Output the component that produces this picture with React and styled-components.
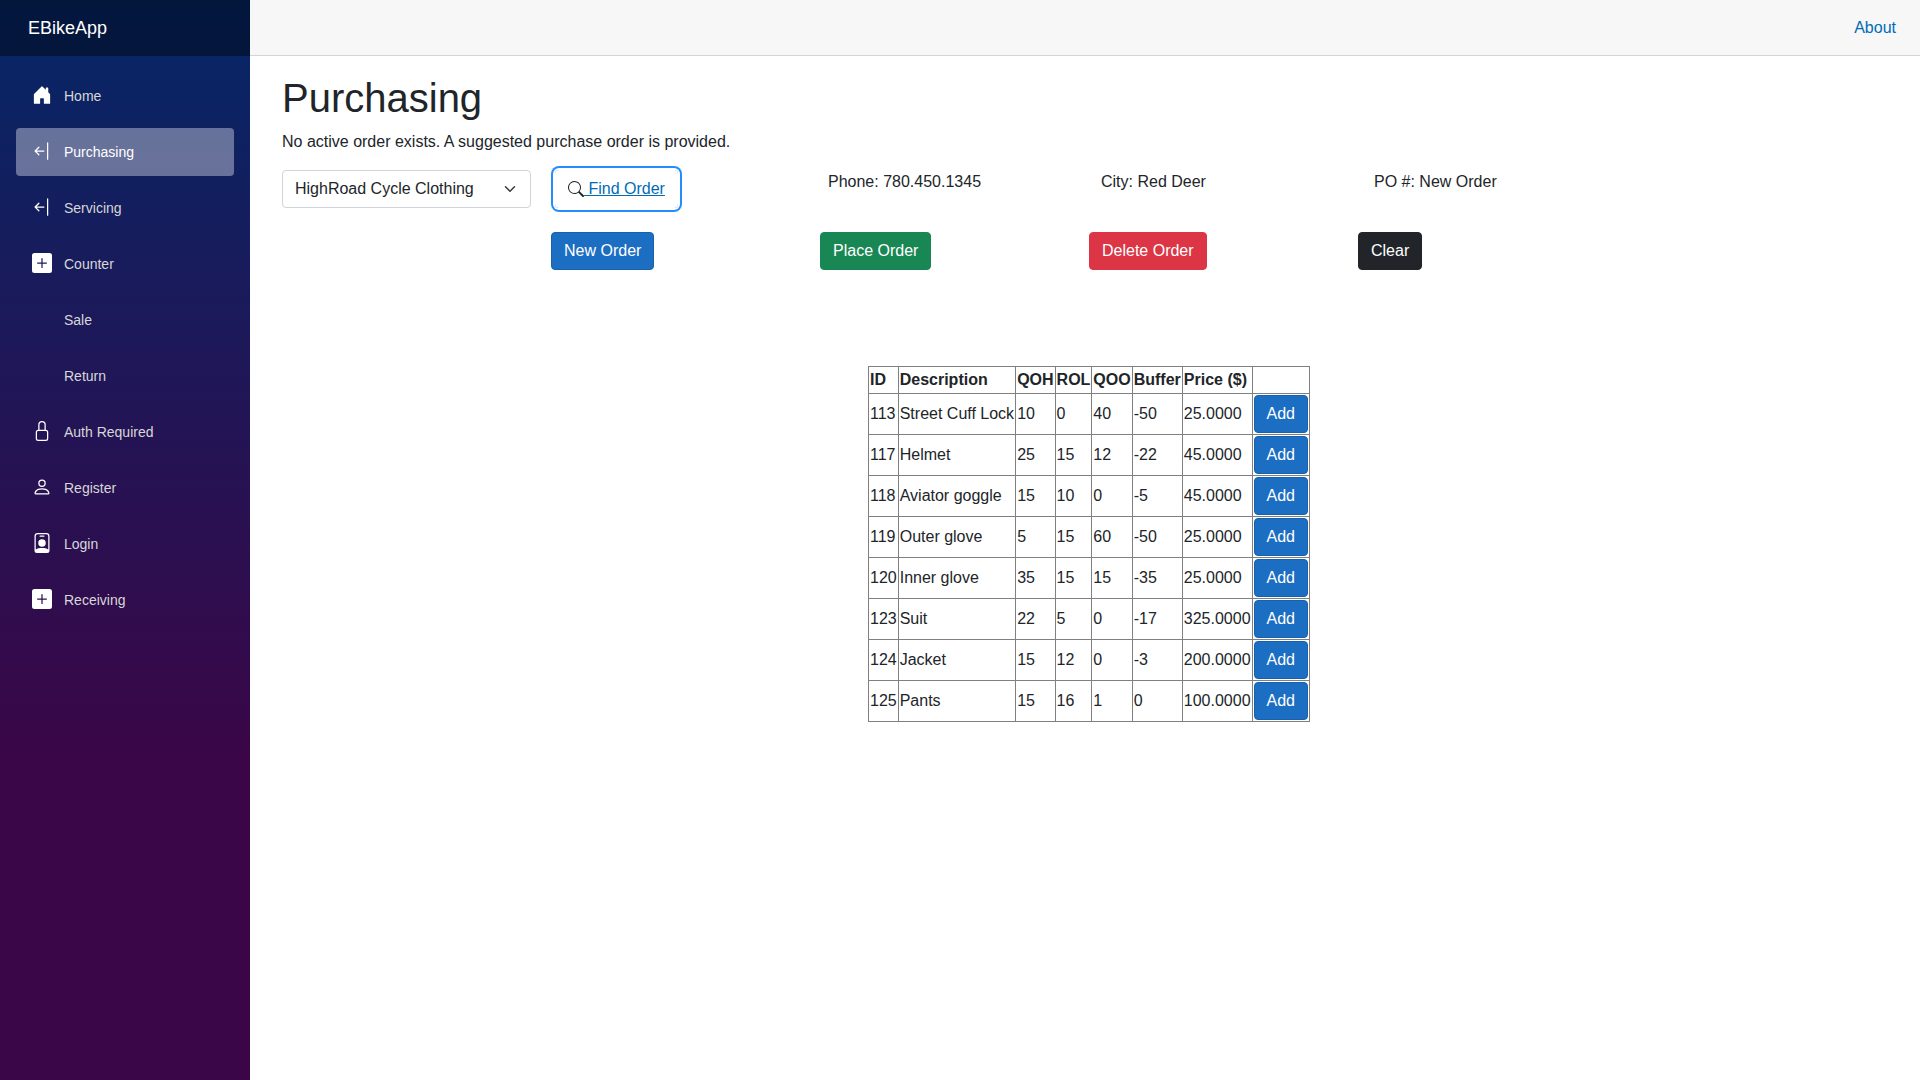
import React, { useState } from "react";
import styled, { createGlobalStyle, css } from "styled-components";

const GlobalStyle = createGlobalStyle`
  *, *::before, *::after { box-sizing: border-box; }
  body {
    margin: 0;
    background: #fff;
    color: #212529;
    font-family: "Helvetica Neue", "Liberation Sans", Arial, sans-serif;
    font-size: 16px;
    line-height: 24px;
  }
  button, select { font: inherit; }
`;

const Page = styled.div`
  display: flex;
  min-height: 100vh;
`;

const Sidebar = styled.aside`
  flex: 0 0 250px;
  background-image: linear-gradient(180deg, rgb(5, 39, 103) 0%, #3a0647 70%);
`;

const SidebarHeader = styled.div`
  display: flex;
  align-items: center;
  height: 56px;
  padding-left: 28px;
  background: rgba(0, 0, 0, 0.4);
`;

const Brand = styled.a`
  color: #fff;
  font-size: 18px;
  text-decoration: none;
`;

const NavList = styled.ul`
  display: flex;
  flex-direction: column;
  gap: 8px;
  margin: 0;
  padding: 16px;
  list-style: none;
`;

const NavLink = styled.a`
  display: flex;
  align-items: center;
  gap: 12px;
  height: 48px;
  padding: 0 16px;
  border-radius: 4px;
  color: #d7d7d7;
  font-size: 14px;
  text-decoration: none;
  ${({ $active }) =>
    $active &&
    css`
      background: rgba(255, 255, 255, 0.37);
      color: #fff;
    `}
`;

const NavIcon = styled.span`
  flex: 0 0 20px;
  height: 22px;
  color: #fff;
`;

const Main = styled.main`
  flex: 1;
  min-width: 0;
`;

const TopRow = styled.header`
  display: flex;
  align-items: center;
  justify-content: flex-end;
  height: 56px;
  padding: 0 24px 0 32px;
  background: #f7f7f7;
  border-bottom: 1px solid #d6d5d5;
`;

const AboutLink = styled.a`
  color: #006bb7;
  text-decoration: none;
`;

const Content = styled.article`
  padding: 18px 24px 24px 32px;
`;

const Title = styled.h1`
  margin: 0 0 8px;
  font-size: 40px;
  font-weight: 400;
  line-height: 48px;
`;

const Message = styled.p`
  margin: 0 0 16px;
`;

const Row = styled.div`
  display: grid;
  grid-template-columns: repeat(6, 1fr);
  margin-bottom: 24px;
`;

const VendorField = styled.div`
  position: relative;
  margin-right: 20px;
`;

const VendorSelect = styled.select`
  display: block;
  width: 100%;
  height: 38px;
  padding: 6px 36px 6px 12px;
  appearance: none;
  background: #fff;
  border: 1px solid #ced4da;
  border-radius: 4px;
  color: #212529;
`;

const Chevron = styled.svg`
  position: absolute;
  right: 13px;
  top: 13px;
  pointer-events: none;
`;

const Details = styled.div`
  grid-column: span 4;
  display: grid;
  grid-template-columns: repeat(4, 1fr);
  margin-right: -24px;
  padding-left: 8px;
`;

const tones = {
  primary: { fill: "#1b6ec2", edge: "#1861ac" },
  success: { fill: "#198754", edge: "#198754" },
  danger: { fill: "#dc3545", edge: "#dc3545" },
  dark: { fill: "#212529", edge: "#212529" },
};

const Button = styled.button`
  justify-self: start;
  height: 38px;
  padding: 6px 12px;
  background: ${({ $tone }) => tones[$tone].fill};
  border: 1px solid ${({ $tone }) => tones[$tone].edge};
  border-radius: 4px;
  color: #fff;
  cursor: pointer;
`;

const ButtonCell = styled.div`
  grid-column-start: ${({ $column }) => $column};
`;

const FindButton = styled.button`
  display: flex;
  align-items: center;
  justify-self: start;
  height: 38px;
  margin-left: 4px;
  padding: 6px 12px;
  background: transparent;
  border: 1px solid transparent;
  border-radius: 4px;
  box-shadow: 0 0 0 2px #fff, 0 0 0 4px #258cfb;
  color: #212529;
  cursor: pointer;
`;

const FindLabel = styled.span`
  color: #006bb7;
  text-decoration: underline;
  white-space: pre;
`;

const ItemTable = styled.table`
  margin: 96px auto 0;
  border-collapse: collapse;
  border: 1px solid gray;

  th, td {
    padding: 1px;
    border: 1px solid gray;
    text-align: left;
  }

  button { display: block; }
`;

const ICONS = {
  house: [
    "M6.5 14.5v-3.505c0-.245.25-.495.5-.495h2c.25 0 .5.25.5.5v3.5a.5.5 0 0 0 .5.5h4a.5.5 0 0 0 .5-.5v-7a.5.5 0 0 0-.146-.354L13 5.793V2.5a.5.5 0 0 0-.5-.5h-1a.5.5 0 0 0-.5.5v1.293L8.354 1.146a.5.5 0 0 0-.708 0l-6 6A.5.5 0 0 0 1.5 7.5v7a.5.5 0 0 0 .5.5h4a.5.5 0 0 0 .5-.5Z",
  ],
  arrowBar: [
    "M12.5 15a.5.5 0 0 1-.5-.5v-13a.5.5 0 0 1 1 0v13a.5.5 0 0 1-.5.5ZM10 8a.5.5 0 0 1-.5.5H3.707l2.147 2.146a.5.5 0 0 1-.708.708l-3-3a.5.5 0 0 1 0-.708l3-3a.5.5 0 1 1 .708.708L3.707 7.5H9.5a.5.5 0 0 1 .5.5Z",
  ],
  plus: [
    "M2 0a2 2 0 0 0-2 2v12a2 2 0 0 0 2 2h12a2 2 0 0 0 2-2V2a2 2 0 0 0-2-2H2zm6.5 4.5v3h3a.5.5 0 0 1 0 1h-3v3a.5.5 0 0 1-1 0v-3h-3a.5.5 0 0 1 0-1h3v-3a.5.5 0 0 1 1 0z",
  ],
  lock: [
    "M8 1a2 2 0 0 1 2 2v4H6V3a2 2 0 0 1 2-2zm3 6V3a3 3 0 0 0-6 0v4a2 2 0 0 0-2 2v5a2 2 0 0 0 2 2h6a2 2 0 0 0 2-2V9a2 2 0 0 0-2-2zM5 8h6a1 1 0 0 1 1 1v5a1 1 0 0 1-1 1H5a1 1 0 0 1-1-1V9a1 1 0 0 1 1-1z",
  ],
  person: [
    "M8 8a3 3 0 1 0 0-6 3 3 0 0 0 0 6Zm2-3a2 2 0 1 1-4 0 2 2 0 0 1 4 0Zm4 8c0 1-1 1-1 1H3s-1 0-1-1 1-4 6-4 6 3 6 4Zm-1-.004c-.001-.246-.154-.986-.832-1.664C11.516 10.68 10.289 10 8 10c-2.29 0-3.516.68-4.168 1.332-.678.678-.83 1.418-.832 1.664h10Z",
  ],
  badge: [
    "M6.5 2a.5.5 0 0 0 0 1h3a.5.5 0 0 0 0-1h-3zM11 8a3 3 0 1 1-6 0 3 3 0 0 1 6 0z",
    "M4.5 0A2.5 2.5 0 0 0 2 2.5V14a2 2 0 0 0 2 2h8a2 2 0 0 0 2-2V2.5A2.5 2.5 0 0 0 11.5 0h-7zM3 2.5A1.5 1.5 0 0 1 4.5 1h7A1.5 1.5 0 0 1 13 2.5v10.795a4.2 4.2 0 0 0-.776-.492C11.392 12.387 10.063 12 8 12s-3.392.387-4.224.803a4.2 4.2 0 0 0-.776.492V2.5z",
  ],
  search: [
    "M11.742 10.344a6.5 6.5 0 1 0-1.397 1.398h-.001c.03.04.062.078.098.115l3.85 3.85a1 1 0 0 0 1.415-1.414l-3.85-3.85a1.007 1.007 0 0 0-.115-.1zM12 6.5a5.5 5.5 0 1 1-11 0 5.5 5.5 0 0 1 11 0z",
  ],
};

function Icon({ name, size }) {
  return (
    <svg width={size} height={size} viewBox="0 0 16 16" fill="currentColor" display="block" aria-hidden="true">
      {ICONS[name].map((d) => (
        <path key={d} d={d} />
      ))}
    </svg>
  );
}

const navItems = [
  { label: "Home", icon: "house" },
  { label: "Purchasing", icon: "arrowBar", active: true },
  { label: "Servicing", icon: "arrowBar" },
  { label: "Counter", icon: "plus" },
  { label: "Sale" },
  { label: "Return" },
  { label: "Auth Required", icon: "lock" },
  { label: "Register", icon: "person" },
  { label: "Login", icon: "badge" },
  { label: "Receiving", icon: "plus" },
];

const headings = ["ID", "Description", "QOH", "ROL", "QOO", "Buffer", "Price ($)", ""];

const items = [
  ["113", "Street Cuff Lock", 10, 0, 40, -50, "25.0000"],
  ["117", "Helmet", 25, 15, 12, -22, "45.0000"],
  ["118", "Aviator goggle", 15, 10, 0, -5, "45.0000"],
  ["119", "Outer glove", 5, 15, 60, -50, "25.0000"],
  ["120", "Inner glove", 35, 15, 15, -35, "25.0000"],
  ["123", "Suit", 22, 5, 0, -17, "325.0000"],
  ["124", "Jacket", 15, 12, 0, -3, "200.0000"],
  ["125", "Pants", 15, 16, 1, 0, "100.0000"],
];

const actions = [
  { label: "New Order", tone: "primary" },
  { label: "Place Order", tone: "success" },
  { label: "Delete Order", tone: "danger" },
  { label: "Clear", tone: "dark" },
];

export default function App() {
  const [vendor, setVendor] = useState("HighRoad Cycle Clothing");

  return (
    <>
      <GlobalStyle />
      <Page>
        <Sidebar>
          <SidebarHeader>
            <Brand href="#">EBikeApp</Brand>
          </SidebarHeader>
          <nav>
            <NavList>
              {navItems.map(({ label, icon, active }) => (
                <li key={label}>
                  <NavLink href="#" $active={active} aria-current={active ? "page" : undefined}>
                    <NavIcon>{icon && <Icon name={icon} size={20} />}</NavIcon>
                    {label}
                  </NavLink>
                </li>
              ))}
            </NavList>
          </nav>
        </Sidebar>
        <Main>
          <TopRow>
            <AboutLink href="#">About</AboutLink>
          </TopRow>
          <Content>
            <Title>Purchasing</Title>
            <Message>No active order exists. A suggested purchase order is provided.</Message>
            <Row>
              <VendorField>
                <VendorSelect aria-label="Vendor" value={vendor} onChange={(e) => setVendor(e.target.value)}>
                  <option>HighRoad Cycle Clothing</option>
                </VendorSelect>
                <Chevron width="16" height="12" viewBox="0 0 16 16" fill="none" stroke="#343a40" strokeWidth="2" strokeLinecap="round" strokeLinejoin="round" aria-hidden="true">
                  <path d="m2 5 6 6 6-6" />
                </Chevron>
              </VendorField>
              <FindButton type="button">
                <Icon name="search" size={16} />
                <FindLabel> Find Order</FindLabel>
              </FindButton>
              <Details>
                <span>Phone: 780.450.1345</span>
                <span>City: Red Deer</span>
                <span>PO #: New Order</span>
              </Details>
            </Row>
            <Row>
              {actions.map(({ label, tone }, index) => (
                <ButtonCell key={label} $column={index + 2}>
                  <Button type="button" $tone={tone}>{label}</Button>
                </ButtonCell>
              ))}
            </Row>
            <ItemTable>
              <thead>
                <tr>
                  {headings.map((heading) => (
                    <th key={heading} scope="col">{heading}</th>
                  ))}
                </tr>
              </thead>
              <tbody>
                {items.map((item) => (
                  <tr key={item[0]}>
                    {item.map((value, index) => (
                      <td key={headings[index]}>{value}</td>
                    ))}
                    <td>
                      <Button type="button" $tone="primary">Add</Button>
                    </td>
                  </tr>
                ))}
              </tbody>
            </ItemTable>
          </Content>
        </Main>
      </Page>
    </>
  );
}
